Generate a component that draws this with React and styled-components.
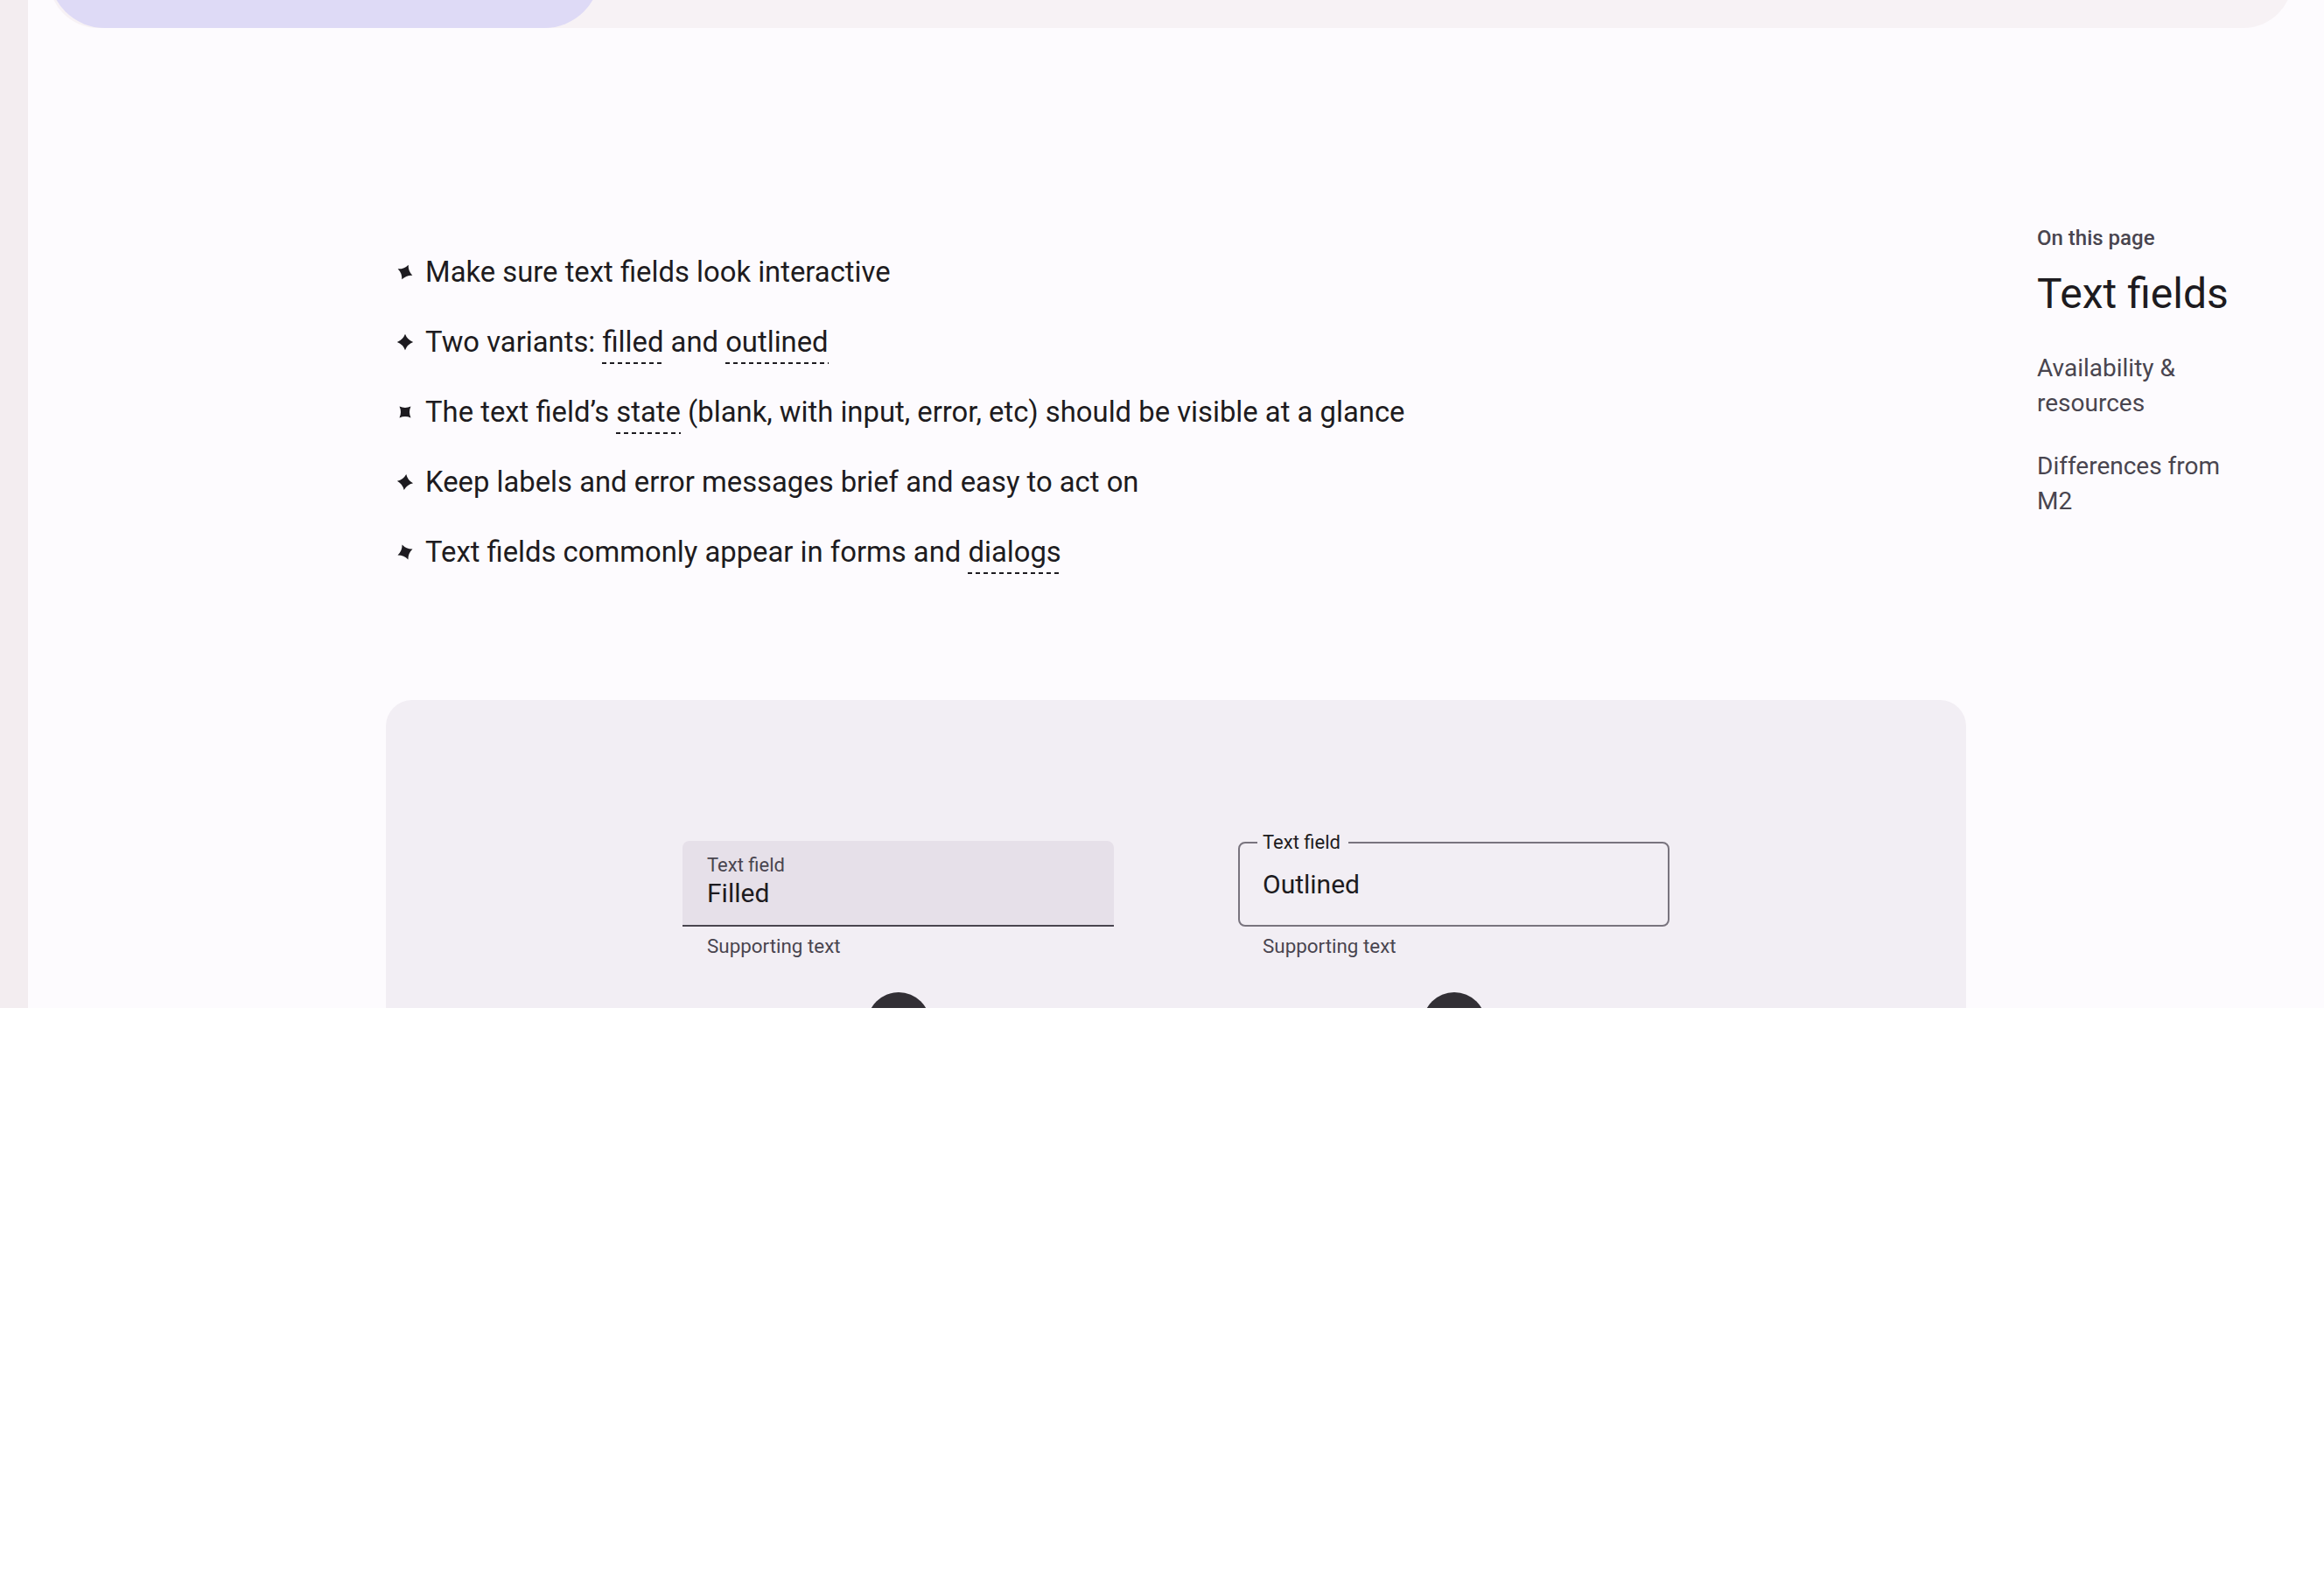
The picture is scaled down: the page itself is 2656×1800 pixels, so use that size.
import React from "react";
import styled, { createGlobalStyle } from "styled-components";

const GlobalStyle = createGlobalStyle`
  html, body {
    margin: 0;
    padding: 0;
    background: #ffffff;
  }
  body {
    font-family: Roboto, "Noto Sans", "Liberation Sans", sans-serif;
    color: #1d1b20;
  }
  * {
    box-sizing: border-box;
  }
`;

const points = [
  { text: ["Make sure text fields look interactive"], turn: 24 },
  {
    text: ["Two variants: ", { link: "filled" }, " and ", { link: "outlined" }],
    turn: 0,
  },
  {
    text: [
      "The text field’s ",
      { link: "state" },
      " (blank, with input, error, etc) should be visible at a glance",
    ],
    turn: 45,
  },
  { text: ["Keep labels and error messages brief and easy to act on"], turn: 8 },
  {
    text: ["Text fields commonly appear in forms and ", { link: "dialogs" }],
    turn: -22,
  },
];

const Sparkle = ({ turn }) => (
  <BulletIcon viewBox="0 0 24 24" $turn={turn}>
    <path d="M12 1 Q15 9 23 12 Q15 15 12 23 Q9 15 1 12 Q9 9 12 1Z" />
  </BulletIcon>
);

const App = () => {
  return (
    <>
      <GlobalStyle />
      <Page>
        <Rail />
        <Main>
          <TopBarWrap>
            <TopBar>
              <ActivePill />
            </TopBar>
          </TopBarWrap>
          <Body>
            <Content>
              <List>
                {points.map((p, i) => (
                  <Item key={i}>
                    <Sparkle turn={p.turn} />
                    <span>
                      {p.text.map((part, j) =>
                        typeof part === "string" ? (
                          <React.Fragment key={j}>{part}</React.Fragment>
                        ) : (
                          <Glossary key={j}>{part.link}</Glossary>
                        )
                      )}
                    </span>
                  </Item>
                ))}
              </List>

              <DemoCard>
                <FieldColumn>
                  <FilledBox>
                    <FilledLabel>Text field</FilledLabel>
                    <Value>Filled</Value>
                  </FilledBox>
                  <Supporting>Supporting text</Supporting>
                  <Handle />
                </FieldColumn>
                <FieldColumn>
                  <OutlinedBox>
                    <Notch>Text field</Notch>
                    <Value>Outlined</Value>
                  </OutlinedBox>
                  <Supporting>Supporting text</Supporting>
                  <Handle />
                </FieldColumn>
              </DemoCard>
            </Content>

            <Toc>
              <TocEyebrow>On this page</TocEyebrow>
              <TocTitle>Text fields</TocTitle>
              <TocLink>Availability &amp; resources</TocLink>
              <TocLink>Differences from M2</TocLink>
            </Toc>
          </Body>
        </Main>
      </Page>
    </>
  );
};

export default App;

const Page = styled.div`
  display: flex;
  height: 1152px;
  overflow: hidden;
  background: #fdfbfe;
`;

const Rail = styled.div`
  width: 32px;
  flex-shrink: 0;
  background: #f3edf0;
`;

const Main = styled.div`
  flex: 1;
  display: flex;
  flex-direction: column;
`;

const TopBarWrap = styled.div`
  height: 32px;
  flex-shrink: 0;
  overflow: hidden;
  padding: 0 36px 0 24px;
`;

const TopBar = styled.div`
  height: 128px;
  margin-top: -96px;
  background: #f7f2f5;
  border-radius: 56px;
  display: flex;
`;

const ActivePill = styled.div`
  width: 630px;
  height: 128px;
  background: #dedaf6;
  border-radius: 64px;
`;

const Body = styled.div`
  display: flex;
  padding-left: 409px;
  gap: 81px;
`;

const Content = styled.div`
  width: 1806px;
  flex-shrink: 0;
  padding-top: 255px;
`;

const List = styled.ul`
  list-style: none;
  margin: 0 0 145px 12px;
  padding: 0;
  display: flex;
  flex-direction: column;
  gap: 32px;
`;

const Item = styled.li`
  display: flex;
  align-items: center;
  gap: 13px;
  font-size: 32.8px;
  line-height: 48px;
  color: #1d1b20;
`;

const BulletIcon = styled.svg`
  width: 20px;
  height: 20px;
  flex-shrink: 0;
  fill: #1d1b20;
  transform: rotate(${(p) => p.$turn}deg);
`;

const Glossary = styled.span`
  padding-bottom: 6px;
  background-image: linear-gradient(to right, #1d1b20 55%, transparent 55%);
  background-size: 9px 2px;
  background-repeat: repeat-x;
  background-position: left bottom;
`;

const DemoCard = styled.div`
  height: 700px;
  background: #f2eef4;
  border-radius: 30px 30px 0 0;
  padding-top: 161px;
  display: flex;
  justify-content: center;
  gap: 142px;
`;

const FieldColumn = styled.div`
  width: 493px;
  display: flex;
  flex-direction: column;
`;

const FilledBox = styled.div`
  height: 98px;
  background: #e6e0e9;
  border-radius: 8px 8px 0 0;
  border-bottom: 2px solid #49454f;
  padding: 14px 28px 0;
  display: flex;
  flex-direction: column;
`;

const FilledLabel = styled.div`
  font-size: 22px;
  line-height: 28px;
  color: #49454f;
`;

const Value = styled.div`
  font-size: 30px;
  line-height: 36px;
  color: #1d1b20;
`;

const OutlinedBox = styled.div`
  position: relative;
  height: 97px;
  margin-top: 1px;
  border: 2px solid #79747e;
  border-radius: 8px;
  padding: 0 26px;
  display: flex;
  align-items: center;
`;

const Notch = styled.span`
  position: absolute;
  top: -17px;
  left: 20px;
  padding: 0 9px 0 6px;
  background: #f2eef4;
  font-size: 22px;
  line-height: 32px;
  color: #1d1b20;
`;

const Supporting = styled.div`
  margin-top: 6px;
  padding-left: 28px;
  font-size: 22.4px;
  line-height: 32px;
  color: #49454f;
`;

const Handle = styled.div`
  width: 72px;
  height: 72px;
  margin: 37px auto 0;
  border-radius: 50%;
  background: #322f35;
`;

const Toc = styled.nav`
  width: 240px;
  padding-top: 224px;
  display: flex;
  flex-direction: column;
`;

const TocEyebrow = styled.div`
  font-size: 24px;
  line-height: 32px;
  font-weight: 500;
  color: #49454f;
`;

const TocTitle = styled.div`
  margin-top: 20px;
  font-size: 48px;
  line-height: 56px;
  color: #1d1b20;
`;

const TocLink = styled.a`
  margin-top: 37px;
  font-size: 28px;
  line-height: 40px;
  color: #49454f;
  & + & {
    margin-top: 32px;
  }
`;
